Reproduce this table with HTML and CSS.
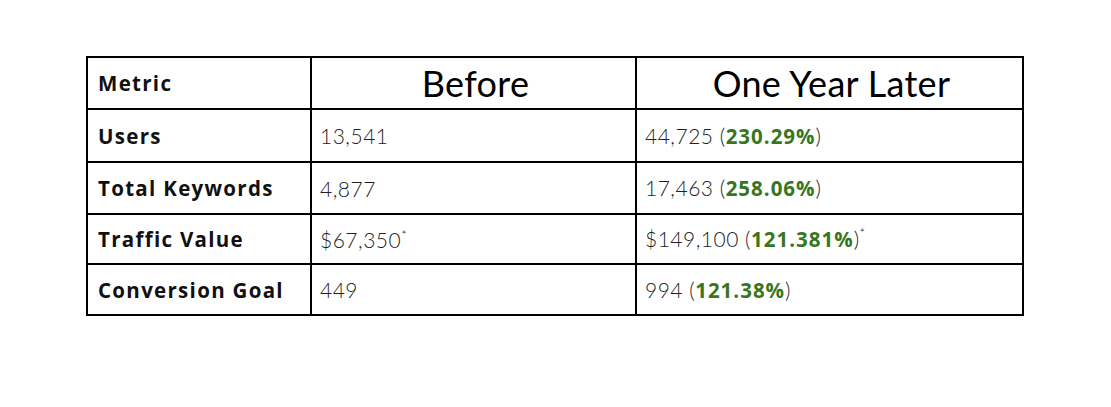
FILE: index.html
```html
<!DOCTYPE html>
<html>
<head>
<meta charset="utf-8">
<link rel="stylesheet" href="styles.css">
</head>
<body>
<div class="page">
  <table class="metrics">
    <colgroup>
      <col class="c1">
      <col class="c2">
      <col class="c3">
    </colgroup>
    <tr class="head">
      <td class="label">Metric</td>
      <td class="title">Before</td>
      <td class="title">One Year Later</td>
    </tr>
    <tr class="r1">
      <td class="label">Users</td>
      <td class="val">13,541</td>
      <td class="val">44,725 (<b class="up">230.29%</b>)</td>
    </tr>
    <tr class="r2">
      <td class="label">Total Keywords</td>
      <td class="val">4,877</td>
      <td class="val">17,463 (<b class="up">258.06%</b>)</td>
    </tr>
    <tr class="r3">
      <td class="label">Traffic Value</td>
      <td class="val">$67,350<sup class="ast">*</sup></td>
      <td class="val">$149,100 (<b class="up">121.381%</b>)<sup class="ast">*</sup></td>
    </tr>
    <tr class="r4">
      <td class="label">Conversion Goal</td>
      <td class="val">449</td>
      <td class="val">994 (<b class="up">121.38%</b>)</td>
    </tr>
  </table>
</div>
</body>
</html>
```
FILE: styles.css
```css
html, body {
  margin: 0;
  padding: 0;
  background: #ffffff;
}
.page {
  padding: 56px 0 0 86px;
}
.metrics {
  border-collapse: collapse;
  table-layout: fixed;
  width: 936px;
}
.c1 { width: 224px; }
.c2 { width: 325px; }
.c3 { width: 387px; }
.metrics td {
  border: 2px solid #000;
  padding: 0 0 0 8px;
  vertical-align: middle;
  color: #222;
}
.head { height: 52px; }
.r1 { height: 53px; }
.r2 { height: 52px; }
.r3 { height: 50px; }
.r4 { height: 51px; }
.metrics td.label {
  font-family: "Open Sans", sans-serif;
  font-weight: 700;
  font-size: 20.5px;
  letter-spacing: 1.3px;
  color: #111;
  padding-left: 10px;
}
.metrics td.title {
  font-family: Lato, sans-serif;
  font-weight: 400;
  font-size: 36px;
  letter-spacing: 0.3px;
  text-align: center;
  color: #000;
  padding: 0 0 0 4px;
}
.val {
  font-family: Lato, sans-serif;
  font-weight: 300;
  font-size: 21px;
  letter-spacing: 0.5px;
}
.up {
  font-family: "Open Sans", sans-serif;
  font-weight: 700;
  color: #38761d;
  font-size: 20.5px;
  letter-spacing: 1px;
}
.ast {
  font-size: 13px;
  vertical-align: top;
  line-height: 1;
  position: relative;
  top: 2px;
}
```
